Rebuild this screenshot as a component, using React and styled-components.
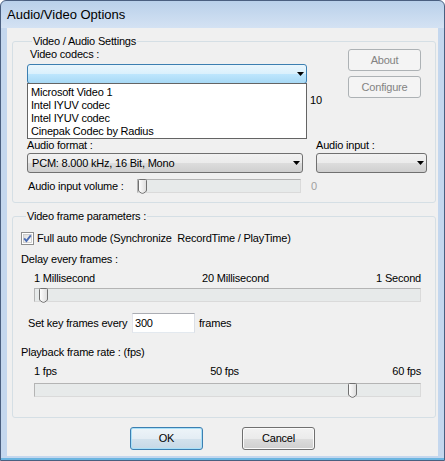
import styled, { createGlobalStyle } from 'styled-components';

const GlobalStyle = createGlobalStyle`
  html, body {
    margin: 0;
    padding: 0;
    background: #ffffff;
    overflow: hidden;
  }
  body {
    font-family: "Liberation Sans", Arial, sans-serif;
  }
`;

const codecs = ['Microsoft Video 1', 'Intel IYUV codec', 'Intel IYUV codec', 'Cinepak Codec by Radius'];

export default function App() {
  return (<>
    <GlobalStyle />
    <Window>
      <TitleBar>Audio/Video Options</TitleBar>
      <Client>

        <Group $height={168}>
          <Legend>Video / Audio Settings</Legend>
          <TopRow>
            <LeftCol>
              <Label $indent={3}>Video codecs :</Label>
              <Combo $w={280} $focused $top={3}>
                <ComboArrow />
                <DropList>
                  {codecs.map((c, i) => <DropItem key={i}>{c}</DropItem>)}
                </DropList>
              </Combo>
              <HiddenRow>10</HiddenRow>
            </LeftCol>
            <ButtonCol>
              <DisabledButton>About</DisabledButton>
              <DisabledButton>Configure</DisabledButton>
            </ButtonCol>
          </TopRow>

          <AudioRow>
            <Field $w={276}>
              <Label>Audio format :</Label>
              <Combo $w={276} $top={1}>
                <ComboText>PCM: 8.000 kHz, 16 Bit, Mono</ComboText>
                <ComboArrow />
              </Combo>
            </Field>
            <Field $w={111}>
              <Label>Audio input :</Label>
              <Combo $w={111} $top={1}>
                <ComboArrow />
              </Combo>
            </Field>
          </AudioRow>

          <VolumeRow>
            <Label $w={110} $indent={1}>Audio input volume :</Label>
            <Track $w={164}>
              <Thumb left={0} />
            </Track>
            <Muted>0</Muted>
          </VolumeRow>
        </Group>

        <Group $height={208} $top={7} $pad="0 14px 0 8px">
          <Legend>Video frame parameters :</Legend>
          <CheckRow>
            <CheckBox />
            <span>Full auto mode (Synchronize&nbsp; RecordTime / PlayTime)</span>
          </CheckRow>

          <Label $top={8}>Delay every frames :</Label>
          <Ticks $top={6}>
            <span>1 Millisecond</span>
            <span>20 Millisecond</span>
            <span>1 Second</span>
          </Ticks>
          <SliderWrap $top={3}>
            <Track $w={387}>
              <Thumb left={4} />
            </Track>
          </SliderWrap>

          <KeyRow>
            <Label $w={107} $indent={7}>Set key frames every</Label>
            <TextInput defaultValue="300" />
            <span>frames</span>
          </KeyRow>

          <Label $top={13}>Playback frame rate : (fps)</Label>
          <Ticks $top={6}>
            <span>1 fps</span>
            <span>50 fps</span>
            <span>60 fps</span>
          </Ticks>
          <SliderWrap $top={5}>
            <Track $w={387}>
              <Thumb left={313} />
            </Track>
          </SliderWrap>
        </Group>

        <ButtonRow>
          <Button $default>OK</Button>
          <Button>Cancel</Button>
        </ButtonRow>
      </Client>
    </Window>
  </>);
}

function ComboArrow() {
  return (
    <ArrowBox>
      <svg width="7" height="4" viewBox="0 0 7 4">
        <path d="M0 0 H7 L3.5 4 Z" fill="#000" />
      </svg>
    </ArrowBox>
  );
}

function Thumb({ left }) {
  return (
    <ThumbBox style={{ left }}>
      <svg width="9" height="15" viewBox="0 0 9 15">
        <defs>
          <linearGradient id="thumbFill" x1="0" y1="0" x2="1" y2="0">
            <stop offset="0" stopColor="#ffffff" />
            <stop offset="1" stopColor="#dcdcdc" />
          </linearGradient>
        </defs>
        <path d="M1.5 0.5 H7.5 Q8.5 0.5 8.5 1.5 V11 Q8.5 12.2 7.4 13 L5.6 14.1 Q4.5 14.7 3.4 14.1 L1.6 13 Q0.5 12.2 0.5 11 V1.5 Q0.5 0.5 1.5 0.5 Z"
          fill="url(#thumbFill)" stroke="#707070" />
      </svg>
    </ThumbBox>
  );
}

function CheckBox() {
  return (
    <CheckBoxBox>
      <svg width="13" height="13" viewBox="0 0 13 13">
        <defs>
          <linearGradient id="checkFill" x1="0" y1="0" x2="1" y2="1">
            <stop offset="0" stopColor="#dcdcdc" />
            <stop offset="1" stopColor="#ffffff" />
          </linearGradient>
        </defs>
        <rect x="0.5" y="0.5" width="12" height="12" fill="#fff" stroke="#8e8f8f" />
        <rect x="2.5" y="2.5" width="8" height="8" fill="url(#checkFill)" stroke="#c6c6c6" strokeWidth="0.8" />
        <path d="M3.2 6.4 L5.4 9 L9.8 3.3" fill="none" stroke="#4a6cb4" strokeWidth="1.9" />
      </svg>
    </CheckBoxBox>
  );
}

const Window = styled.div`
  width: 445px;
  height: 461px;
  box-sizing: border-box;
  border: 1px solid #4a5f80;
  border-radius: 6px 6px 0 0;
  background: linear-gradient(#b9d0ea 0, #d4e2f3 27px, #c4d7ee 27px, #c4d7ee 100%);
  padding: 0 6px 4px;
  display: flex;
  flex-direction: column;
  box-shadow: inset 0 -2px 0 #6bb5e0;
`;

const TitleBar = styled.div`
  height: 27px;
  flex-shrink: 0;
  display: flex;
  align-items: center;
  font-size: 13px;
  color: #000;
`;

const Client = styled.div`
  flex: 1;
  background: #f0f0f0;
  padding: 7px 2px 0 5px;
  display: flex;
  flex-direction: column;
  font-size: 11px;
  letter-spacing: -0.2px;
  line-height: 13px;
  color: #000;
`;

const Group = styled.fieldset`
  box-sizing: border-box;
  height: ${p => p.$height}px;
  margin: ${p => p.$top || 0}px 0 0;
  padding: ${p => p.$pad || '0 8px 0 14px'};
  min-width: 0;
  border: 1px solid #d5dfe5;
  border-radius: 3px;
  display: flex;
  flex-direction: column;
`;

const Legend = styled.legend`
  padding: 0 1px;
  margin-left: 5px;
  line-height: 13px;
`;

const Label = styled.div`
  margin-top: ${p => p.$top || 0}px;
  padding-left: ${p => p.$indent || 0}px;
  width: ${p => (p.$w ? `${p.$w}px` : 'auto')};
  flex-shrink: 0;
  box-sizing: border-box;
  white-space: nowrap;
`;

const TopRow = styled.div`
  display: flex;
  justify-content: space-between;
  align-items: flex-start;
`;

const LeftCol = styled.div`
  width: 300px;
  display: flex;
  flex-direction: column;
`;

const HiddenRow = styled.div`
  margin-top: 10px;
  padding-left: 283px;
`;

const ButtonCol = styled.div`
  display: flex;
  flex-direction: column;
  gap: 5px;
  margin: 1px 6px 0 0;
`;

const Combo = styled.div`
  position: relative;
  box-sizing: border-box;
  width: ${p => p.$w}px;
  height: 20px;
  margin-top: ${p => p.$top || 0}px;
  border: 1px solid ${p => (p.$focused ? '#3c7fb1' : '#707070')};
  border-radius: 3px;
  background: ${p => (p.$focused
    ? 'linear-gradient(#eaf6fd, #d9f0fc 50%, #bee6fd 50%, #a7d9f5)'
    : 'linear-gradient(#f2f2f2, #ebebeb 50%, #dddddd 50%, #cfcfcf)')};
  display: flex;
  align-items: center;
  padding-left: 4px;
`;

const ComboText = styled.span`
  white-space: nowrap;
`;

const ArrowBox = styled.span`
  margin-left: auto;
  margin-right: 2px;
  display: flex;
  line-height: 0;
`;

const DropList = styled.div`
  position: absolute;
  left: -1px;
  top: 18px;
  z-index: 10;
  box-sizing: border-box;
  width: 280px;
  height: 56px;
  padding-top: 2px;
  background: #ffffff;
  border: 1px solid #646464;
`;

const DropItem = styled.div`
  padding-left: 3px;
  height: 13px;
  white-space: nowrap;
`;

const AudioRow = styled.div`
  display: flex;
  gap: 13px;
  margin-top: 32px;
`;

const Field = styled.div`
  width: ${p => p.$w}px;
  display: flex;
  flex-direction: column;
`;

const VolumeRow = styled.div`
  display: flex;
  align-items: center;
  margin-top: 6px;
`;

const Track = styled.div`
  position: relative;
  box-sizing: border-box;
  width: ${p => p.$w}px;
  height: 14px;
  flex-shrink: 0;
  background: #e7eaea;
  border: 1px solid;
  border-color: #b4b4b4 #dadada #dadada #b4b4b4;
`;

const ThumbBox = styled.span`
  position: absolute;
  top: -1px;
  display: block;
  line-height: 0;
`;

const Muted = styled.span`
  margin-left: 10px;
  color: #a0a0a0;
`;

const CheckRow = styled.div`
  display: flex;
  align-items: center;
  gap: 3px;
  margin-top: 9px;
  height: 13px;
`;

const CheckBoxBox = styled.span`
  display: flex;
  line-height: 0;
`;

const Ticks = styled.div`
  display: flex;
  justify-content: space-between;
  margin-top: ${p => p.$top}px;
  padding-left: 13px;
  white-space: nowrap;
`;

const SliderWrap = styled.div`
  margin-top: ${p => p.$top}px;
  padding-left: 13px;
`;

const KeyRow = styled.div`
  display: flex;
  align-items: center;
  gap: 4px;
  margin-top: 11px;
`;

const TextInput = styled.input`
  box-sizing: border-box;
  width: 63px;
  height: 20px;
  margin: 0;
  padding: 0 0 0 2px;
  border: 1px solid;
  border-color: #abadb3 #dbdfe6 #e3e9ef #e2e3ea;
  background: #ffffff;
  font: inherit;
  letter-spacing: inherit;
  color: #000;
  outline: none;
`;

const ButtonRow = styled.div`
  display: flex;
  justify-content: center;
  gap: 39px;
  margin-top: 9px;
  padding-right: 3px;
`;

const Button = styled.button`
  box-sizing: border-box;
  width: 73px;
  height: 23px;
  padding: 0;
  font: inherit;
  letter-spacing: inherit;
  color: #000;
  border-radius: 3px;
  border: 1px solid ${p => (p.$default ? '#3c7fb1' : '#707070')};
  background: ${p => (p.$default
    ? 'linear-gradient(#edf4f9, #e4edf4 50%, #d3e2ed 50%, #c6d8e6)'
    : 'linear-gradient(#f2f2f2, #ebebeb 50%, #dddddd 50%, #cfcfcf)')};
  box-shadow: ${p => (p.$default ? 'inset 0 0 0 1px #a8e0f8' : 'inset 0 0 0 1px #fbfbfb')};
`;

const DisabledButton = styled.button`
  box-sizing: border-box;
  width: 73px;
  height: 22px;
  padding: 0;
  font: inherit;
  letter-spacing: inherit;
  color: #838383;
  border-radius: 3px;
  border: 1px solid #adb2b5;
  background: #f4f4f4;
`;
